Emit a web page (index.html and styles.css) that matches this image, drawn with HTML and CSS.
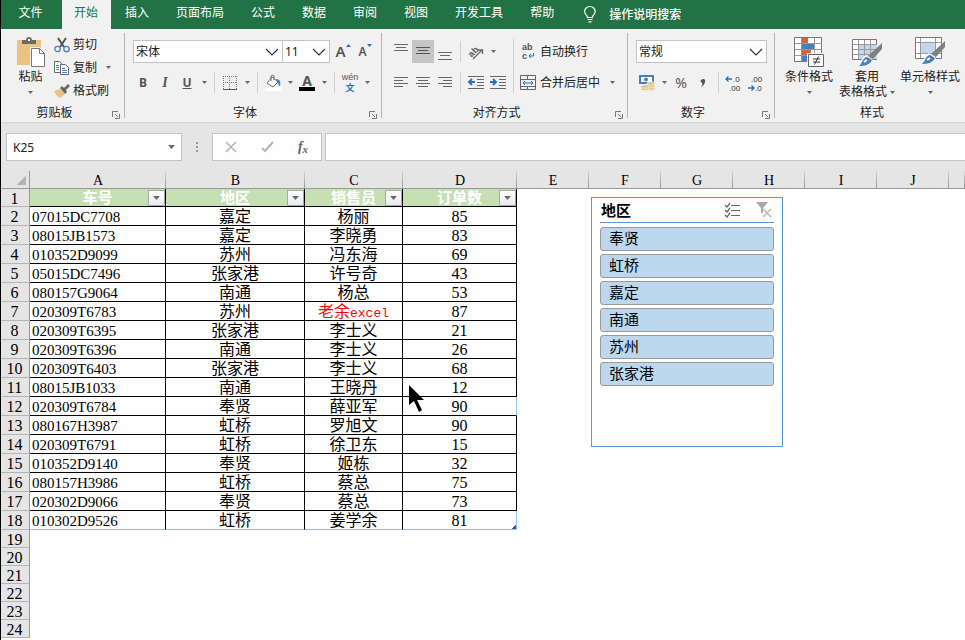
FILE: index.html
```html
<!DOCTYPE html>
<html lang="zh-CN">
  <head>
    <meta charset="UTF-8">
    <title>Excel</title>
    <meta name="viewport" content="width=device-width">
    <link rel="stylesheet" href="styles.css">
  </head>
  <body>
    <!-- Shapes used more than once -->
    <svg class="defs" width="0" height="0">
      <symbol id="drop" viewBox="0 0 5 3"><path d="M0 0h5L2.5 3z" fill="#666"/></symbol>
      <symbol id="chevron" viewBox="0 0 14 8"><path d="M1 1l6 6 6-6" fill="none" stroke="#333" stroke-width="1.2"/></symbol>
      <symbol id="launcher" viewBox="0 0 8 8"><path d="M.5 6V.5H6M3 3l3 3M7.5 3v4.500H3" fill="none" stroke="#777"/></symbol>
      <symbol id="brush" viewBox="0 0 24 24"><path d="M24 0v6l-9 10-5-3z" fill="#808080"/><path d="M8 12l7 5c-1 6-8 7-15 7 4-3 2-10 8-12z" fill="#f1f1f1"/><path d="M9 14l5 3c-2 5-8 6-13 6 4-3 3-8 8-9z" fill="#4a80ba"/><path d="M6 19l3-2" stroke="#fff" stroke-width="2"/></symbol>
    </svg>

    <nav class="tabs">
      <a class="tab file" href="#">文件</a>
      <a class="tab active" href="#">开始</a>
      <a class="tab" href="#">插入</a>
      <a class="tab" href="#">页面布局</a>
      <a class="tab" href="#">公式</a>
      <a class="tab" href="#">数据</a>
      <a class="tab" href="#">审阅</a>
      <a class="tab" href="#">视图</a>
      <a class="tab" href="#">开发工具</a>
      <a class="tab" href="#">帮助</a>
      <a class="tab tellMe" href="#">
        <svg width="12" height="17" viewBox="0 0 12 17" fill="none" stroke="#fff" stroke-width="1.2"><path d="M3.500 11.500C3.500 9 .6 8.500 .6 5.500a5.200 4.900 0 0 1 10.600 0c0 3-2.900 3.500-2.900 6zM3.500 13.500h5M4.500 15.800h3"/></svg>
        操作说明搜索
      </a>
    </nav>

    <div class="ribbon">
      <section class="group clipboard">
        <div class="groupBody">
          <button class="bigButton">
            <svg width="30" height="30" viewBox="0 0 30 30"><path d="M1 3h24v25H1z" fill="#eac282"/><path d="M6 7V3h4c0-4 6-4 6 0h4v4z" fill="#6a6a6a"/><path d="M12 2h2v2h-2z" fill="#fff"/><path d="M14 10h10l6 6v14H14z" fill="#f1f1f1"/><path d="M15.500 11.500h8l5 5v13h-13z" fill="#fff" stroke="#777"/><path d="M23.500 11.500v5h5" fill="none" stroke="#777"/></svg>
            <span>粘贴</span>
            <span><svg class="drop"><use href="#drop"/></svg></span>
          </button>
          <div class="smallButtons">
            <button class="textButton">
              <svg width="16" height="16" viewBox="0 0 16 16" fill="none"><path d="M4 1l6 9M12 1L6 10" stroke="#555" stroke-width="2"/><circle cx="3.500" cy="12" r="2.700" stroke="#4a80ba" stroke-width="1.300"/><circle cx="12.500" cy="12" r="2.700" stroke="#4a80ba" stroke-width="1.300"/></svg>
              剪切
            </button>
            <button class="textButton">
              <svg width="16" height="16" viewBox="0 0 16 16" fill="#fff" stroke="#666"><path d="M.5 1.500h5l3 3v8h-8z"/><path d="M6.500 4.500h5l3 3v7h-8z"/><path d="M2 5.500h3M2 7.500h3M2 9.500h3M8 8.500h3M8 10.500h5M8 12.500h5" stroke="#4a80ba"/></svg>
              复制
              <svg class="drop"><use href="#drop"/></svg>
            </button>
            <button class="textButton">
              <svg width="16" height="16" viewBox="0 0 16 16"><path d="M0 8l6-2 5 5-5 4c-2-1-4-3-6-7z" fill="#eac282"/><path d="M6 5l2-2 2 2 4-4 2 2-4 4 1 2-2 2z" fill="#666"/></svg>
              格式刷
            </button>
          </div>
        </div>
        <div class="groupLabel"><h2>剪贴板</h2><button class="launcher" aria-label="剪贴板选项"><svg width="8" height="8"><use href="#launcher"/></svg></button></div>
      </section>

      <section class="group font">
        <div class="groupBody rows">
          <div class="row">
            <div class="combo fontName"><select aria-label="字体"><option>宋体</option></select><svg><use href="#chevron"/></svg></div>
            <div class="combo fontSize"><select aria-label="字号"><option>11</option></select><svg><use href="#chevron"/></svg></div>
            <button class="tool grow">A<svg width="5" height="3" viewBox="0 0 5 3"><path d="M0 3h5L2.500 0z" fill="#2f6fb5"/></svg></button>
            <button class="tool shrink">A<svg width="5" height="3" viewBox="0 0 5 3"><path d="M0 0h5L2.500 3z" fill="#2f6fb5"/></svg></button>
          </div>
          <div class="row">
            <button class="tool bold">B</button>
            <button class="tool italic">I</button>
            <button class="tool underline">U</button>
            <button class="dropButton" aria-label="下划线选项"><svg class="drop"><use href="#drop"/></svg></button>
            <i class="divider"></i>
            <button class="tool" aria-label="边框"><svg width="14" height="14" viewBox="0 0 14 14" fill="none" stroke="#777"><path d="M.5 0v13M6.500 0v13M13.500 0v13M0 .5h14M0 6.500h14" stroke-dasharray="1 1"/><path d="M0 13.500h14" stroke="#555"/></svg></button>
            <button class="dropButton" aria-label="边框选项"><svg class="drop"><use href="#drop"/></svg></button>
            <i class="divider"></i>
            <button class="tool" aria-label="填充颜色"><svg width="16" height="16" viewBox="0 0 16 16"><path d="M0 12h16v4H0z" fill="#fff"/><path d="M7 2l6 5-5 5-6-4z" fill="#fff" stroke="#666"/><path d="M6 6V1c0-1 3-1 3 0v4" fill="none" stroke="#666"/><path d="M11 4c4 0 5 3 4 7-2 0-1-3-3-4z" fill="#4a80ba"/></svg></button>
            <button class="dropButton" aria-label="填充颜色选项"><svg class="drop"><use href="#drop"/></svg></button>
            <button class="tool fontColor">A</button>
            <button class="dropButton" aria-label="字体颜色选项"><svg class="drop"><use href="#drop"/></svg></button>
            <i class="divider"></i>
            <button class="tool phonetic"><span>wén</span><b>文</b></button>
            <button class="dropButton" aria-label="拼音选项"><svg class="drop"><use href="#drop"/></svg></button>
          </div>
        </div>
        <div class="groupLabel"><h2>字体</h2><button class="launcher" aria-label="字体选项"><svg width="8" height="8"><use href="#launcher"/></svg></button></div>
      </section>

      <section class="group align">
        <div class="groupBody">
          <div class="rows">
            <div class="row">
              <button class="tool" aria-label="顶端对齐"><svg width="14" height="16" viewBox="0 0 14 16" stroke="#666"><path d="M0 .5h14M2 3.500h10M0 6.500h14"/></svg></button>
              <button class="tool selected" aria-label="垂直居中"><svg width="14" height="16" viewBox="0 0 14 16" stroke="#555"><path d="M0 3.500h14M2 6.500h10M0 9.500h14"/></svg></button>
              <button class="tool" aria-label="底端对齐"><svg width="14" height="16" viewBox="0 0 14 16" stroke="#666"><path d="M0 8.500h14M2 11.500h10M0 15.500h14"/></svg></button>
              <i class="divider"></i>
              <button class="tool" aria-label="方向"><svg width="18" height="18" viewBox="0 0 18 18"><text x="1" y="12" transform="rotate(-45 6 9)" class="iconText">ab</text><path d="M6 16l9-9M11 7h4.500v4" fill="none" stroke="#666" stroke-width="1.300"/></svg></button>
              <button class="dropButton" aria-label="方向选项"><svg class="drop"><use href="#drop"/></svg></button>
            </div>
            <div class="row">
              <button class="tool" aria-label="左对齐"><svg width="14" height="12" viewBox="0 0 14 12" stroke="#666"><path d="M0 .5h14M0 3.500h9M0 6.500h14M0 9.500h9"/></svg></button>
              <button class="tool" aria-label="居中"><svg width="14" height="12" viewBox="0 0 14 12" stroke="#666"><path d="M0 .5h14M2 3.500h10M0 6.500h14M2 9.500h10"/></svg></button>
              <button class="tool" aria-label="右对齐"><svg width="14" height="12" viewBox="0 0 14 12" stroke="#666"><path d="M0 .5h14M5 3.500h9M0 6.500h14M5 9.500h9"/></svg></button>
              <i class="divider"></i>
              <button class="tool" aria-label="减少缩进"><svg width="16" height="14" viewBox="0 0 16 14" fill="none" stroke="#666"><path d="M0 .5h16M9 3.500h7M9 6.500h7M9 9.500h7M0 12.500h16"/><path d="M1 6h6M4 3L1 6l3 3" stroke="#2f6fb5" stroke-width="2"/></svg></button>
              <button class="tool" aria-label="增加缩进"><svg width="16" height="14" viewBox="0 0 16 14" fill="none" stroke="#666"><path d="M0 .5h16M9 3.500h7M9 6.500h7M9 9.500h7M0 12.500h16"/><path d="M0 6h6M3 3l3 3-3 3" stroke="#2f6fb5" stroke-width="2"/></svg></button>
            </div>
          </div>
          <i class="divider tall"></i>
          <div class="rows">
            <div class="row">
              <button class="textButton">
                <svg width="16" height="22" viewBox="0 0 16 22"><text x="2" y="9" class="iconText">ab</text><text x="2" y="18" class="iconText">c</text><path d="M13.500 12v3H9M11 13l-2 2 2 2" fill="none" stroke="#2f6fb5"/></svg>
                自动换行
              </button>
            </div>
            <div class="row">
              <button class="textButton">
                <svg width="16" height="16" viewBox="0 0 16 16" fill="none" stroke="#666"><path d="M.5 .5h15v14H.5zM.5 4.500h15M.5 11.500h15M7.500 1v3M7.500 12v3"/><path d="M3 8h10M5 6L3 8l2 2M11 6l2 2-2 2" stroke="#2f6fb5"/></svg>
                合并后居中
                <svg class="drop"><use href="#drop"/></svg>
              </button>
            </div>
          </div>
        </div>
        <div class="groupLabel"><h2>对齐方式</h2><button class="launcher" aria-label="对齐选项"><svg width="8" height="8"><use href="#launcher"/></svg></button></div>
      </section>

      <section class="group number">
        <div class="groupBody rows">
          <div class="row">
            <div class="combo format"><select aria-label="数字格式"><option>常规</option></select><svg><use href="#chevron"/></svg></div>
          </div>
          <div class="row">
            <button class="tool" aria-label="会计数字格式"><svg width="18" height="16" viewBox="0 0 18 16"><path d="M1 0h15v9H1z" fill="#4a80ba"/><path d="M3 2h11v5H3z" fill="#fff"/><circle cx="8" cy="4.500" r="2" fill="#4a80ba"/><g fill="#eac282" stroke="#f1f1f1" stroke-width=".7"><ellipse cx="13" cy="13.500" rx="4" ry="1.800"/><ellipse cx="13" cy="11" rx="4" ry="1.800"/><ellipse cx="13" cy="8.500" rx="4" ry="1.800"/><ellipse cx="7" cy="14" rx="4" ry="1.800"/><ellipse cx="7" cy="11.500" rx="4" ry="1.800"/></g></svg></button>
            <button class="dropButton" aria-label="会计格式选项"><svg class="drop"><use href="#drop"/></svg></button>
            <button class="tool percent">%</button>
            <button class="tool comma" aria-label="千位分隔样式"><svg width="6" height="8" viewBox="0 0 6 8"><path d="M1 1c2-2 5-1 4 2S3 7 1 8c1-2 2-3 1-4S0 2 1 1z" fill="#555"/></svg></button>
            <i class="divider"></i>
            <button class="tool" aria-label="增加小数位数"><svg width="20" height="20" viewBox="0 0 20 20"><text x="9" y="9" class="digits">.0</text><text x="5" y="18" class="digits">.00</text><path d="M2 6h6M4.500 3.500L2 6l2.500 2.500" fill="none" stroke="#2f6fb5" stroke-width="1.300"/></svg></button>
            <button class="tool" aria-label="减少小数位数"><svg width="20" height="20" viewBox="0 0 20 20"><text x="5" y="9" class="digits">.00</text><text x="9" y="18" class="digits">.0</text><path d="M2 15h6M5.500 12.500L8 15l-2.500 2.500" fill="none" stroke="#2f6fb5" stroke-width="1.300"/></svg></button>
          </div>
        </div>
        <div class="groupLabel"><h2>数字</h2><button class="launcher" aria-label="数字选项"><svg width="8" height="8"><use href="#launcher"/></svg></button></div>
      </section>

      <section class="group styles">
        <div class="groupBody">
          <button class="bigButton">
            <svg width="30" height="30" viewBox="0 0 30 30"><path d="M.5 .5h27v24H.5z" fill="#fff" stroke="#777"/><path d="M8 1h6v5H8zM8 13h9v5H8z" fill="#d95f43"/><path d="M8 7h12v5H8zM8 19h5v5H8z" fill="#4a80ba"/><path d="M7.500 1v23M20.500 1v23M1 6.500h27M1 12.500h27M1 18.500h27" stroke="#999" fill="none"/><path d="M13 16h17v14H13z" fill="#f1f1f1"/><path d="M14.500 17.500h15v12h-15z" fill="#fff" stroke="#666"/><path d="M19 22h7M19 25h7M24.500 19.500l-4 8" stroke="#333" fill="none"/></svg>
            <span>条件格式</span>
            <span><svg class="drop"><use href="#drop"/></svg></span>
          </button>
          <button class="bigButton">
            <svg width="30" height="30" viewBox="0 0 30 30"><path d="M.5 2.500h24v20H.5z" fill="#fff" stroke="#777"/><path d="M7 8h18v14H7z" fill="#c3d5ea"/><path d="M6.500 3v19M12.500 3v19M18.500 3v19M1 7.500h24M1 12.500h24M1 17.500h24" stroke="#999" fill="none"/><use href="#brush" x="6" y="6" width="24" height="24"/></svg>
            <span>套用</span>
            <span>表格格式 <svg class="drop"><use href="#drop"/></svg></span>
          </button>
          <button class="bigButton wide">
            <svg width="30" height="30" viewBox="0 0 30 30"><path d="M.5 .5h26v21H.5z" fill="#fff" stroke="#777"/><path d="M6 6h14v10H6z" fill="#c3d5ea"/><path d="M5.500 1v20M20.500 1v20M1 5.500h25M1 16.500h25" stroke="#999" fill="none"/><use href="#brush" x="6" y="4" width="24" height="24"/></svg>
            <span>单元格样式</span>
            <span><svg class="drop"><use href="#drop"/></svg></span>
          </button>
        </div>
        <div class="groupLabel"><h2>样式</h2></div>
      </section>
    </div>

    <div class="formulaBar">
      <div class="nameBox"><input type="text" aria-label="名称框" value="K25"><svg class="drop"><use href="#drop"/></svg></div>
      <svg class="grip" width="2" height="10" viewBox="0 0 2 10" fill="#999"><path d="M0 0h2v2H0zM0 4h2v2H0zM0 8h2v2H0z"/></svg>
      <div class="formulaButtons">
        <button aria-label="取消"><svg width="12" height="12" viewBox="0 0 12 12"><path d="M1 1l10 10M11 1L1 11" stroke="#b5b5b5" stroke-width="1.600"/></svg></button>
        <button aria-label="输入"><svg width="13" height="12" viewBox="0 0 13 12"><path d="M1 7l3 3 8-9" fill="none" stroke="#b5b5b5" stroke-width="2"/></svg></button>
        <button class="fx">f<sub>x</sub></button>
      </div>
      <input class="formula" type="text" aria-label="编辑栏">
    </div>

    <main class="sheet">
      <table>
        <colgroup>
          <col class="colHead"><col class="colA"><col class="colB"><col class="colC"><col class="colD">
          <col class="colPlain"><col class="colPlain"><col class="colPlain"><col class="colPlain"><col class="colPlain"><col class="colPlain"><col>
        </colgroup>
        <thead>
          <tr><th class="corner"></th><th>A</th><th>B</th><th>C</th><th>D</th><th>E</th><th>F</th><th>G</th><th>H</th><th>I</th><th>J</th><th></th></tr>
        </thead>
        <tbody class="data">
          <tr class="titles">
            <th>1</th>
            <td>车号<button class="filter" aria-label="筛选车号"><svg><use href="#drop"/></svg></button></td>
            <td>地区<button class="filter" aria-label="筛选地区"><svg><use href="#drop"/></svg></button></td>
            <td>销售员<button class="filter" aria-label="筛选销售员"><svg><use href="#drop"/></svg></button></td>
            <td>订单数<button class="filter" aria-label="筛选订单数"><svg><use href="#drop"/></svg></button></td>
          </tr>
          <tr><th>2</th><td>07015DC7708</td><td>嘉定</td><td>杨丽</td><td>85</td></tr>
          <tr><th>3</th><td>08015JB1573</td><td>嘉定</td><td>李晓勇</td><td>83</td></tr>
          <tr><th>4</th><td>010352D9099</td><td>苏州</td><td>冯东海</td><td>69</td></tr>
          <tr><th>5</th><td>05015DC7496</td><td>张家港</td><td>许号奇</td><td>43</td></tr>
          <tr><th>6</th><td>080157G9064</td><td>南通</td><td>杨总</td><td>53</td></tr>
          <tr><th>7</th><td>020309T6783</td><td>苏州</td><td class="red">老余<span>excel</span></td><td>87</td></tr>
          <tr><th>8</th><td>020309T6395</td><td>张家港</td><td>李士义</td><td>21</td></tr>
          <tr><th>9</th><td>020309T6396</td><td>南通</td><td>李士义</td><td>26</td></tr>
          <tr><th>10</th><td>020309T6403</td><td>张家港</td><td>李士义</td><td>68</td></tr>
          <tr><th>11</th><td>08015JB1033</td><td>南通</td><td>王晓丹</td><td>12</td></tr>
          <tr><th>12</th><td>020309T6784</td><td>奉贤</td><td>薛亚军</td><td class="blueEdge">90</td></tr>
          <tr><th>13</th><td>080167H3987</td><td>虹桥</td><td>罗旭文</td><td>90</td></tr>
          <tr><th>14</th><td>020309T6791</td><td>虹桥</td><td>徐卫东</td><td>15</td></tr>
          <tr><th>15</th><td>010352D9140</td><td>奉贤</td><td>姬栋</td><td>32</td></tr>
          <tr><th>16</th><td>080157H3986</td><td>虹桥</td><td>蔡总</td><td>75</td></tr>
          <tr><th>17</th><td>020302D9066</td><td>奉贤</td><td>蔡总</td><td>73</td></tr>
          <tr class="last"><th>18</th><td>010302D9526</td><td>虹桥</td><td>姜学余</td><td class="blueEdge">81</td></tr>
        </tbody>
        <tbody class="empty">
          <tr><th>19</th></tr>
          <tr><th>20</th></tr>
          <tr><th>21</th></tr>
          <tr><th>22</th></tr>
          <tr><th>23</th></tr>
          <tr><th>24</th></tr>
        </tbody>
      </table>

      <!-- Slicer floats over the cells -->
      <aside class="slicer">
        <header>
          <h3>地区</h3>
          <button aria-label="多选"><svg width="17" height="15" viewBox="0 0 17 15" fill="none" stroke="#666"><path d="M7 2.500h9M7 7.500h9M7 12.500h9"/><path d="M1 2l2 2 3-4M1 7l2 2 3-4M1 12l2 2 3-4" stroke-width="1.300"/></svg></button>
          <button aria-label="清除筛选器"><svg width="17" height="16" viewBox="0 0 17 16"><path d="M0 0h12L7 6v5H5V6z" fill="#aaa"/><path d="M7 7l8 8M15 7l-8 8" stroke="#bbb" stroke-width="1.500"/></svg></button>
        </header>
        <button class="item">奉贤</button>
        <button class="item">虹桥</button>
        <button class="item">嘉定</button>
        <button class="item">南通</button>
        <button class="item">苏州</button>
        <button class="item">张家港</button>
      </aside>

      <svg class="pointer" width="17" height="28" viewBox="0 0 17 28"><path d="M1 0v20l5-4 5 11 3-2-5-10h7z" fill="#000"/></svg>
    </main>
  </body>
</html>
```
FILE: styles.css
```css
:root {
  --green: #217346;
  --ribbon: #f1f1f1;
  --chrome: #e5e5e5;
  --line: #c3c3c3;
  --blue: #5b9bd5;
}
* { box-sizing: border-box; }
body {
  margin: 0;
  min-height: 100vh;
  display: flex;
  flex-direction: column;
  border-left: 1px solid #000;
  background-color: #fefefe;
  color: #222;
  font: 12px/15px "Noto Sans", "Noto Sans CJK SC", sans-serif;
  overflow-x: hidden;
}
button, input, select {
  font: inherit;
  color: inherit;
  margin: 0;
  padding: 0;
  border: 0;
  border-radius: 0;
  background: none;
}
svg { flex: none; overflow: visible; }
h2, h3 { margin: 0; font-size: 12px; font-weight: normal; }
.defs { position: absolute; }
.drop { width: 5px; height: 3px; }

/* Tabs */
.tabs {
  display: flex;
  gap: 2px;
  height: 29px;
  background-color: var(--green);
}
.tab {
  flex: none;
  padding: 0 13px 0 12px;
  color: #fff;
  line-height: 26px;
  text-decoration: none;
  white-space: nowrap;
}
.tab.file { width: 59px; padding: 0; text-align: center; }
.tab.active { background-color: var(--ribbon); color: var(--green); }
.tab.tellMe { display: flex; align-items: center; gap: 13px; padding-left: 15px; font-weight: 500; }

/* Ribbon */
.ribbon {
  display: flex;
  height: 94px;
  padding-top: 4px;
  background-color: var(--ribbon);
  border-bottom: 1px solid #d2d2d2;
  overflow: hidden;
}
.group {
  flex: none;
  display: flex;
  flex-direction: column;
  height: 85px;
  border-right: 1px solid #b5b5b5;
}
.clipboard { width: 124px; }
.font { width: 257px; }
.align { width: 246px; }
.number { width: 147px; }
.styles { width: 194px; border-right: 0; }
.groupBody { flex: 1; display: flex; padding-left: 7px; }
.groupLabel { display: flex; height: 15px; margin-bottom: -2px; }
.groupLabel h2 { flex: 1; text-align: center; line-height: 15px; }
.launcher { width: 16px; height: 15px; line-height: 0; padding-top: 4px; }
.rows { display: flex; flex-direction: column; gap: 8px; padding-top: 7px; }
.row { display: flex; align-items: center; height: 23px; }
.tool, .dropButton {
  flex: none;
  display: flex;
  align-items: center;
  justify-content: center;
  width: 22px;
  height: 23px;
  color: #555;
}
.dropButton { width: 12px; }
.selected { background-color: #c5c5c5; }
.divider { flex: none; width: 1px; height: 21px; margin: 0 4px; background-color: #d0d0d0; }
.divider.tall { height: 54px; margin-top: 6px; }
.textButton {
  display: flex;
  align-items: center;
  gap: 4px;
  height: 23px;
  padding-left: 2px;
  white-space: nowrap;
}
.textButton .drop { margin-left: 6px; }
.smallButtons .textButton { gap: 3px; padding-left: 1px; }
.bigButton {
  display: flex;
  flex-direction: column;
  align-items: center;
  width: 58px;
  padding-top: 4px;
  white-space: nowrap;
}
.bigButton > svg { margin-bottom: 2px; }
.bigButton span { height: 15px; }
.bigButton .drop { vertical-align: middle; }
.bigButton.wide { width: 68px; }
.clipboard .groupBody { padding-left: 7px; }
.clipboard .bigButton { width: 45px; }
.styles .groupBody { padding-left: 5px; }
.align .groupBody { padding-left: 8px; }
.number .groupBody { padding-left: 8px; }

.combo { position: relative; height: 23px; background-color: #fff; border: 1px solid var(--line); }
.combo select { appearance: none; width: 100%; height: 21px; padding-left: 2px; }
.combo svg { position: absolute; right: 3px; top: 7px; width: 14px; height: 8px; pointer-events: none; }
.fontName { width: 150px; margin-left: 1px; }
.fontSize { width: 48px; margin-left: -1px; margin-right: 2px; }
.format { width: 131px; }
.grow, .shrink { align-items: center; font-weight: 600; }
.grow { font-size: 15px; }
.shrink { font-size: 12px; }
.grow svg, .shrink svg { align-self: flex-start; margin-top: 4px; }
.bold { font-weight: bold; }
.italic { font: italic bold 14px "Liberation Serif", serif; }
.underline { font-weight: bold; text-decoration: underline; }
.fontColor { height: 16px; border-bottom: 4px solid #000; width: 16px; margin: 0 3px; font-size: 14px; font-weight: bold; }
.phonetic { flex-direction: column; font: 9px/11px "Liberation Sans", "Noto Sans CJK SC", sans-serif; }
.phonetic b { color: #2f6fb5; }
.percent { font-size: 14px; }
.iconText { font: bold 9px "Liberation Sans", sans-serif; fill: #555; }
.digits { font: 8px "Liberation Sans", sans-serif; fill: #333; }

/* Formula bar */
.formulaBar {
  display: flex;
  align-items: center;
  height: 48px;
  padding-left: 5px;
  background-color: var(--chrome);
}
.nameBox, .formulaButtons, .formula {
  height: 28px;
  background-color: #fefefe;
  border: 1px solid var(--line);
}
.nameBox { display: flex; align-items: center; width: 176px; padding: 0 6px; }
.nameBox input { flex: 1; min-width: 0; }
.nameBox .drop { width: 7px; height: 4px; }
.grip { margin: 0 14px; }
.formulaButtons { display: flex; width: 110px; margin-right: 3px; }
.formulaButtons button { flex: 1; display: flex; align-items: center; justify-content: center; }
.formulaButtons .fx { font: italic bold 14px/14px "Liberation Serif", serif; color: #666; }
.fx sub { font-size: 11px; line-height: 0; padding-top: 4px; }
.formula { flex: 1; min-width: 0; border-right: 0; padding: 0 6px; }

/* Sheet */
.sheet { position: relative; flex: 1; }
table {
  width: 100%;
  table-layout: fixed;
  border-spacing: 0;
  color: #000;
  font: 16px/16px "Liberation Serif", "Noto Sans CJK SC", serif;
}
.colHead { width: 29px; }
.colA { width: 136px; }
.colB { width: 139px; }
.colC { width: 98px; }
.colD { width: 114px; }
.colPlain { width: 72px; }
th, td { padding: 2px 0 0; text-align: center; font-weight: normal; white-space: nowrap; }
thead th {
  height: 18px;
  font-size: 14px;
  line-height: 15px;
  background: linear-gradient(#d5d5d5, #999) right / 1px 100% no-repeat var(--chrome);
  border-bottom: 1px solid #999;
}
.corner { background: linear-gradient(135deg, transparent 50%, #b5b5b5 50%) 15px 4px / 10px 10px no-repeat var(--chrome); border-right: 1px solid #999; }
tbody th {
  background-color: var(--chrome);
  border-right: 1px solid #999;
  border-bottom: 1px solid #b5b5b5;
  padding-right: 1px;
}
.data td {
  position: relative;
  border-right: 1px solid #000;
  border-bottom: 1px solid #000;
}
.data td:nth-child(2) { padding-left: 2px; font-size: 15px; text-align: left; }
.data .titles td {
  padding: 2px 0 0;
  background-color: #c6e0b4;
  color: #fff;
  font-size: 15px;
  font-weight: bold;
  text-align: center;
}
.titles th, .data .titles td, .empty th { line-height: 15px; }
.data .last td { border-bottom-color: #9db9e0; }
.data .blueEdge { border-right-color: #9dc3f0; }
.last .blueEdge::after {
  content: "";
  position: absolute;
  right: 0;
  bottom: 0;
  width: 4px;
  height: 4px;
  background: linear-gradient(135deg, transparent 50%, #3f51a5 50%);
}
.red { color: #f00; }
.red span { font: 13px/1 "Liberation Mono", monospace; }
.filter {
  position: absolute;
  right: 0;
  top: 1px;
  display: flex;
  align-items: center;
  justify-content: center;
  width: 17px;
  height: 16px;
  background: linear-gradient(#fff, #e8ebf0);
  border: 1px solid #a5a9b0;
}
.filter svg { width: 7px; height: 4px; }

/* Slicer */
.slicer {
  position: absolute;
  left: 590px;
  top: 26px;
  display: flex;
  flex-direction: column;
  gap: 3px;
  width: 192px;
  min-height: 250px;
  padding: 0 8px;
  background-color: #fefefe;
  border: 1px solid var(--blue);
  color: #000;
}
.slicer header {
  display: flex;
  align-items: center;
  gap: 15px;
  height: 25px;
  margin-bottom: 1px;
  padding-right: 1px;
  border-bottom: 1px solid var(--blue);
}
.slicer header button { height: 16px; line-height: 0; }
.slicer h3 { flex: 1; padding-left: 1px; font-size: 15px; font-weight: bold; }
.item {
  height: 24px;
  padding: 0 0 2px 8px;
  background-color: #bdd7ee;
  border: 1px solid #999;
  border-radius: 3px;
  font-size: 15px;
  line-height: 20px;
  text-align: left;
}
.pointer { position: absolute; left: 407px; top: 214px; }
```
